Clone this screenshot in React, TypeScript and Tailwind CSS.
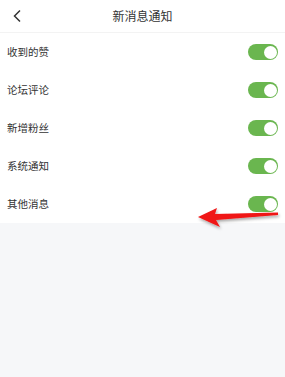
const items = ['收到的赞', '论坛评论', '新增粉丝', '系统通知', '其他消息']

function Toggle() {
  return (
    <div className="w-[30px] h-[16px] rounded-full bg-[#6ab64f] flex items-center justify-end pr-[1.5px]">
      <div className="w-[13px] h-[13px] rounded-full bg-white" />
    </div>
  )
}

export default function App() {
  return (
    <div
      className="relative w-[285px] h-[377px] bg-[#f6f7f9] overflow-hidden text-[#333]"
      style={{ fontFamily: '"Noto Sans CJK SC", "Noto Sans", sans-serif' }}
    >
      <div className="h-[33px] bg-white flex items-center relative border-b border-[#f3f3f3]">
        <svg className="absolute left-[11px] top-[9px]" width="12" height="14" viewBox="0 0 12 14">
          <path d="M9 1.5 L3.5 7 L9 12.5" fill="none" stroke="#333" strokeWidth="1.5" />
        </svg>
        <div className="flex-1 text-center text-[12px] leading-none">新消息通知</div>
      </div>
      <div className="bg-white">
        {items.map(t => (
          <div key={t} className="h-[38px] flex items-center justify-between pl-[7px] pr-[7px]">
            <span className="text-[10.5px] leading-none text-[#333]">{t}</span>
            <Toggle />
          </div>
        ))}
      </div>
      <svg className="absolute left-[192px] top-[200px]" width="90" height="32" viewBox="0 0 90 32">
        <defs>
          <filter id="s" x="-20%" y="-40%" width="140%" height="180%">
            <feDropShadow dx="1" dy="2" stdDeviation="1.5" floodColor="#000" floodOpacity="0.35" />
          </filter>
        </defs>
        <path
          d="M6 17 L25 8 L23 14 L86 12.5 L86 15 L24 20 L28 27 Z"
          fill="#f01414"
          filter="url(#s)"
        />
      </svg>
    </div>
  )
}
